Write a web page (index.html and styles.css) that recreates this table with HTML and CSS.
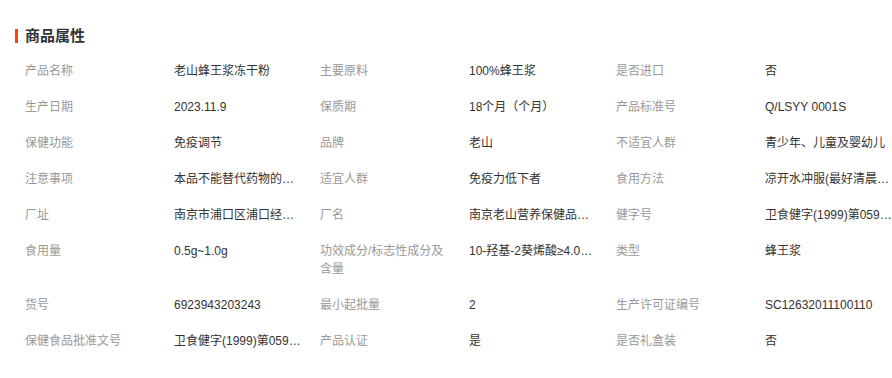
FILE: index.html
```html
<!DOCTYPE html>
<html lang="zh-CN">
<head>
<meta charset="utf-8">
<title>商品属性</title>
<link rel="stylesheet" href="styles.css">
</head>
<body>
<section class="attr-section">
  <h2 class="attr-title"><span class="bar"></span>商品属性</h2>
  <div class="attr-grid">
    <div class="item"><span class="label">产品名称</span><span class="value">老山蜂王浆冻干粉</span></div>
    <div class="item"><span class="label">主要原料</span><span class="value">100%蜂王浆</span></div>
    <div class="item"><span class="label">是否进口</span><span class="value">否</span></div>

    <div class="item"><span class="label">生产日期</span><span class="value">2023.11.9</span></div>
    <div class="item"><span class="label">保质期</span><span class="value">18个月（个月）</span></div>
    <div class="item"><span class="label">产品标准号</span><span class="value">Q/LSYY 0001S</span></div>

    <div class="item"><span class="label">保健功能</span><span class="value">免疫调节</span></div>
    <div class="item"><span class="label">品牌</span><span class="value">老山</span></div>
    <div class="item"><span class="label">不适宜人群</span><span class="value">青少年、儿童及婴幼儿</span></div>

    <div class="item"><span class="label">注意事项</span><span class="value">本品不能替代药物的使用</span></div>
    <div class="item"><span class="label">适宜人群</span><span class="value">免疫力低下者</span></div>
    <div class="item"><span class="label">食用方法</span><span class="value">凉开水冲服(最好清晨空腹)</span></div>

    <div class="item"><span class="label">厂址</span><span class="value">南京市浦口区浦口经济开发区</span></div>
    <div class="item"><span class="label">厂名</span><span class="value">南京老山营养保健品有限公司</span></div>
    <div class="item"><span class="label">健字号</span><span class="value">卫食健字(1999)第0595号</span></div>

    <div class="item"><span class="label">食用量</span><span class="value">0.5g~1.0g</span></div>
    <div class="item"><span class="label">功效成分/标志性成分及含量</span><span class="value">10-羟基-2葵烯酸≥4.0g/100g</span></div>
    <div class="item"><span class="label">类型</span><span class="value">蜂王浆</span></div>

    <div class="item"><span class="label">货号</span><span class="value">6923943203243</span></div>
    <div class="item"><span class="label">最小起批量</span><span class="value">2</span></div>
    <div class="item"><span class="label">生产许可证编号</span><span class="value">SC12632011100110</span></div>

    <div class="item"><span class="label">保健食品批准文号</span><span class="value">卫食健字(1999)第0595号</span></div>
    <div class="item"><span class="label">产品认证</span><span class="value">是</span></div>
    <div class="item"><span class="label">是否礼盒装</span><span class="value">否</span></div>
  </div>
</section>
</body>
</html>
```
FILE: styles.css
```css
html, body {
  margin: 0;
  padding: 0;
  background: #fff;
}
body {
  font-family: "Liberation Sans", "Noto Sans CJK SC", sans-serif;
  font-size: 12px;
  color: #333;
}
.attr-section {
  padding-top: 27px;
}
.attr-title {
  display: flex;
  align-items: center;
  margin: 0 0 8px 0;
  padding-left: 15px;
  height: 18px;
  line-height: 18px;
  font-size: 15px;
  font-weight: bold;
  color: #333;
}
.attr-title .bar {
  display: inline-block;
  width: 3px;
  height: 14px;
  background: #ff4400;
  margin-right: 7px;
}
.attr-grid {
  display: grid;
  grid-template-columns: 295px 296px 276px;
  padding-left: 25px;
}
.item {
  display: flex;
  align-items: flex-start;
  padding: 9px 0;
  line-height: 18px;
}
.label {
  flex: none;
  width: 130px;
  margin-right: 19px;
  color: #999;
}
.value {
  flex: none;
  width: 127px;
  color: #333;
  white-space: nowrap;
  overflow: hidden;
  text-overflow: ellipsis;
}
```
